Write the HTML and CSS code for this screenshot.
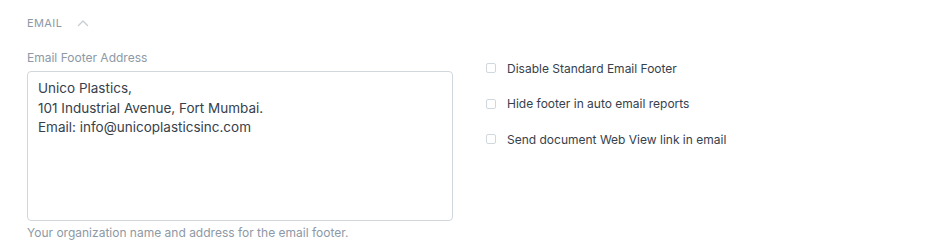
FILE: index.html
```html
<!DOCTYPE html>
<html>
<head>
    <meta charset="UTF-8">
    <title>Email Settings</title>
    <link rel="stylesheet" href="styles.css">
</head>
<body>

    <div class="section">
        <div class="section-head">
            <span class="section-title">Email</span>
            <svg class="collapse-icon" width="12" height="8" viewBox="0 0 12 8">
                <path d="M1.5 6.5 L6 2 L10.5 6.5" fill="none" stroke="#c8cdd2" stroke-width="1.4" stroke-linecap="round" stroke-linejoin="round"/>
            </svg>
        </div>

        <div class="section-body">
            <div class="column main">
                <label class="control-label">Email Footer Address</label>
                <div class="textarea">Unico Plastics,<br>101 Industrial Avenue, Fort Mumbai.<br>Email: info@unicoplasticsinc.com</div>
                <p class="help-text">Your organization name and address for the email footer.</p>
            </div>

            <div class="column checks">
                <label class="check"><span class="box"></span>Disable Standard Email Footer</label>
                <label class="check"><span class="box"></span>Hide footer in auto email reports</label>
                <label class="check"><span class="box"></span>Send document Web View link in email</label>
            </div>
        </div>
    </div>

</body>
</html>
```

FILE: styles.css
```css
body {
    margin: 0;
    background-color: #fff;
    font-family: Inter, "Noto Sans", sans-serif;
    color: #36414c;
}

.section {
    padding: 16px 27px 0 27px;
}

.section-head {
    display: flex;
    align-items: center;
    gap: 15px;
    height: 14px;
}

.section-title {
    font-size: 11px;
    text-transform: uppercase;
    letter-spacing: 0.4px;
    color: #8d99a6;
}

.section-body {
    display: flex;
    gap: 33px;
    margin-top: 20px;
}

.main {
    width: 426px;
    flex-shrink: 0;
}

.checks {
    flex: 1;
    padding-top: 9px;
}

.control-label {
    display: block;
    font-size: 12px;
    color: #8d99a6;
    line-height: 16px;
    margin-bottom: 5px;
}

.textarea {
    height: 134px;
    border: 1px solid #d1d8dd;
    border-radius: 4px;
    padding: 7px 10px;
    font-size: 13.5px;
    line-height: 19.5px;
    color: #36414c;
}

.help-text {
    margin: 4px 0 0 0;
    font-size: 12px;
    color: #8d99a6;
}

.check {
    display: flex;
    align-items: center;
    font-size: 12px;
    height: 18px;
    margin-bottom: 17.6px;
}

.box {
    width: 8px;
    height: 8px;
    border: 1px solid #d1d8dd;
    border-radius: 2px;
    margin-right: 11px;
}
```
